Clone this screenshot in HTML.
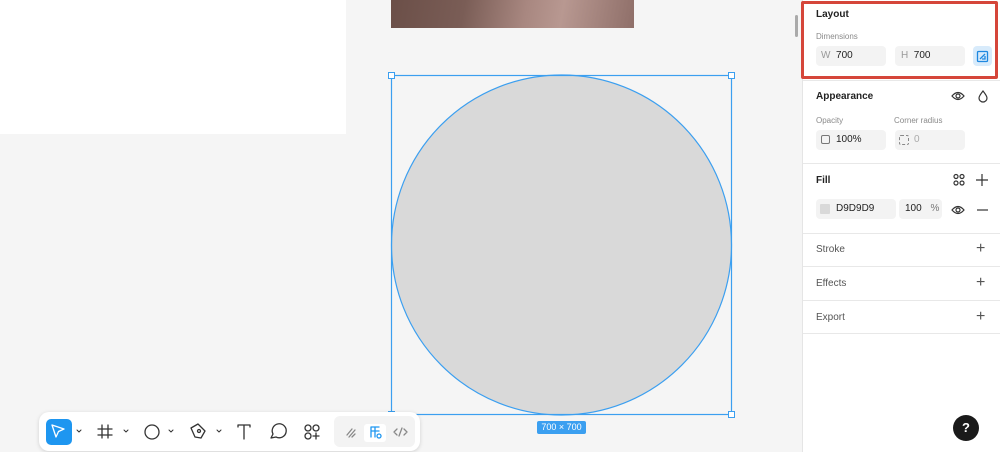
<!DOCTYPE html>
<html><head><style>
*{margin:0;padding:0;box-sizing:border-box}
body{width:1000px;height:452px;overflow:hidden;background:#f5f5f5;font-family:"Liberation Sans",sans-serif;position:relative}
.a{position:absolute}
.t{font-size:10px;color:#222}
.sm{font-size:8px;color:#8a8a8a}
.inp{position:absolute;background:#f3f3f3;border-radius:4px;height:20px;font-size:10px;color:#222;line-height:20px}
.hr{position:absolute;left:803px;width:197px;height:1px;background:#e8e8e8}
.plus{position:absolute;font-size:16px;color:#555;line-height:16px}
</style></head><body>
<div class="a" style="left:0;top:0;width:346px;height:134px;background:#fff"></div>
<div class="a" style="left:391px;top:0;width:243px;height:28px;background:linear-gradient(100deg,#6b4f48 0%,#7a5d56 30%,#a88780 55%,#b89891 70%,#8f6f69 100%)"></div>
<div class="a" style="left:795px;top:15px;width:3px;height:22px;background:#aaa;border-radius:2px"></div>
<svg class="a" style="left:0;top:0" width="800" height="452">
<circle cx="561.5" cy="245" r="170" fill="#d9d9d9" stroke="#3b9ff0" stroke-width="1.2"/>
<rect x="391.5" y="75.5" width="340" height="339" fill="none" stroke="#3b9ff0" stroke-width="1.2"/>
<g fill="#fff" stroke="#3b9ff0"><rect x="388.5" y="72.5" width="6" height="6"/><rect x="728.5" y="72.5" width="6" height="6"/><rect x="388.5" y="411.5" width="6" height="6"/><rect x="728.5" y="411.5" width="6" height="6"/></g>
</svg>
<div class="a" style="left:537px;top:421px;width:49px;height:13px;background:#3b9ff0;border-radius:2px;color:#fff;font-size:9px;text-align:center;line-height:13px">700 × 700</div>
<!-- toolbar -->
<div class="a" style="left:39px;top:412px;width:381px;height:39px;background:#fff;border-radius:10px;box-shadow:0 1px 4px rgba(0,0,0,.15)"></div>
<div class="a" style="left:334px;top:416px;width:81px;height:31px;background:#f3f3f3;border-radius:6px"></div>
<div class="a" style="left:46px;top:419px;width:26px;height:26px;background:#1e96f0;border-radius:5px"></div>
<svg class="a" style="left:39px;top:412px" width="381" height="39" fill="none" stroke="#333" stroke-width="1.3" stroke-linecap="round" stroke-linejoin="round">
<path d="M13 13 L25 17 L19.5 19.5 L17 25 Z" stroke="#fff"/>
<path d="M38 18l2 2 2-2M85 18l2 2 2-2M130 18l2 2 2-2M178 18l2 2 2-2" stroke-width="1"/>
<path d="M63 13v13M69 13v13M59 17h14M59 23h14"/>
<circle cx="113" cy="20" r="7"/>
<path d="M152 16l7-4 7 7-4 7-6-1z"/><circle cx="160" cy="19" r="1.5"/>
<path d="M199 13h12M205 13v14M199 13v2M211 13v2"/>
<path d="M232 26l2-4a7 7 0 1 1 3 3z"/>
<circle cx="269" cy="16" r="3"/><circle cx="277" cy="16" r="3"/><circle cx="269" cy="24" r="3"/><path d="M277 21v6M274 24h6"/>
<path d="M308 23l5-6M310 25l6-7M313 25l3-3" stroke="#888"/>
<rect x="325" y="12" width="22" height="18" rx="3" fill="#fff" stroke="none"/>
<path d="M332 15h8M332 15v10M336 15v10M332 19h8" stroke="#1e96f0"/><circle cx="340" cy="24" r="2" stroke="#1e96f0"/>
<path d="M358 17l-3 3 3 3M365 17l3 3-3 3M363 16l-3 8" stroke="#888"/>
</svg>
<!-- panel -->
<div class="a" style="left:802px;top:0;width:198px;height:452px;background:#fff;border-left:1px solid #e5e5e5"></div>
<div class="a" style="left:801px;top:1px;width:197px;height:78px;border:3px solid #d5463a;border-radius:2px"></div>
<div class="a t" style="left:816px;top:9px;font-weight:bold">Layout</div>
<div class="a sm" style="left:816px;top:32px">Dimensions</div>
<div class="inp" style="left:816px;top:46px;width:70px;padding-left:5px"><span style="color:#999">W</span>&nbsp; 700</div>
<div class="inp" style="left:895px;top:46px;width:70px;padding-left:6px"><span style="color:#999">H</span>&nbsp; 700</div>
<div class="a" style="left:973px;top:46px;width:19px;height:20px;background:#d8ebfb;border-radius:4px"></div>
<svg class="a" style="left:976px;top:50px" width="13" height="13" fill="none" stroke="#1e88e0" stroke-width="1.3"><rect x="1.5" y="1.5" width="10" height="10" rx="1"/><path d="M4 9l5-5M6 9h3V6"/></svg>
<div class="hr" style="top:80px"></div>
<div class="a t" style="left:816px;top:91px;font-weight:bold">Appearance</div>
<svg class="a" style="left:950px;top:89px" width="45" height="14" fill="none" stroke="#333" stroke-width="1.2"><path d="M2 7q6-7 12 0q-6 7-12 0z"/><circle cx="8" cy="7" r="2"/><path d="M33 2q-4 5-4 7a4 4 0 0 0 8 0q0-2-4-7z"/></svg>
<div class="a sm" style="left:816px;top:116px">Opacity</div>
<div class="a sm" style="left:894px;top:116px">Corner radius</div>
<div class="inp" style="left:816px;top:130px;width:70px;padding-left:20px">100%</div>
<div class="a" style="left:821px;top:135px;width:9px;height:9px;border:1px solid #777;border-radius:2px"></div>
<div class="inp" style="left:895px;top:130px;width:70px;padding-left:19px;color:#aaa">0</div>
<div class="a" style="left:899px;top:135px;width:10px;height:10px;border:1px dashed #888;border-radius:2px"></div>
<div class="hr" style="top:163px"></div>
<div class="a t" style="left:816px;top:175px;font-weight:bold">Fill</div>
<svg class="a" style="left:952px;top:173px" width="40" height="14" fill="none" stroke="#333" stroke-width="1.2"><circle cx="4" cy="3.5" r="2"/><circle cx="10" cy="3.5" r="2"/><circle cx="4" cy="10" r="2"/><circle cx="10" cy="10" r="2"/><path d="M30 1v12M24 7h12"/></svg>
<div class="inp" style="left:816px;top:199px;width:80px;padding-left:20px">D9D9D9</div>
<div class="a" style="left:820px;top:204px;width:10px;height:10px;background:#d9d9d9;border-radius:1px"></div>
<div class="inp" style="left:899px;top:199px;width:43px;padding-left:6px">100 <span style="color:#777;margin-left:6px">%</span></div>
<svg class="a" style="left:950px;top:203px" width="45" height="14" fill="none" stroke="#333" stroke-width="1.2"><path d="M2 7q6-7 12 0q-6 7-12 0z"/><circle cx="8" cy="7" r="2"/><path d="M27 7h11"/></svg>
<div class="hr" style="top:233px"></div>
<div class="a t" style="left:816px;top:244px;color:#555">Stroke</div><div class="plus" style="left:976px;top:241px">+</div>
<div class="hr" style="top:266px"></div>
<div class="a t" style="left:816px;top:278px;color:#555">Effects</div><div class="plus" style="left:976px;top:275px">+</div>
<div class="hr" style="top:300px"></div>
<div class="a t" style="left:816px;top:312px;color:#555">Export</div><div class="plus" style="left:976px;top:309px">+</div>
<div class="hr" style="top:333px"></div>
<div class="a" style="left:953px;top:415px;width:26px;height:26px;border-radius:50%;background:#1a1a1a;color:#fff;font-size:13px;font-weight:bold;text-align:center;line-height:26px">?</div>
</body></html>
